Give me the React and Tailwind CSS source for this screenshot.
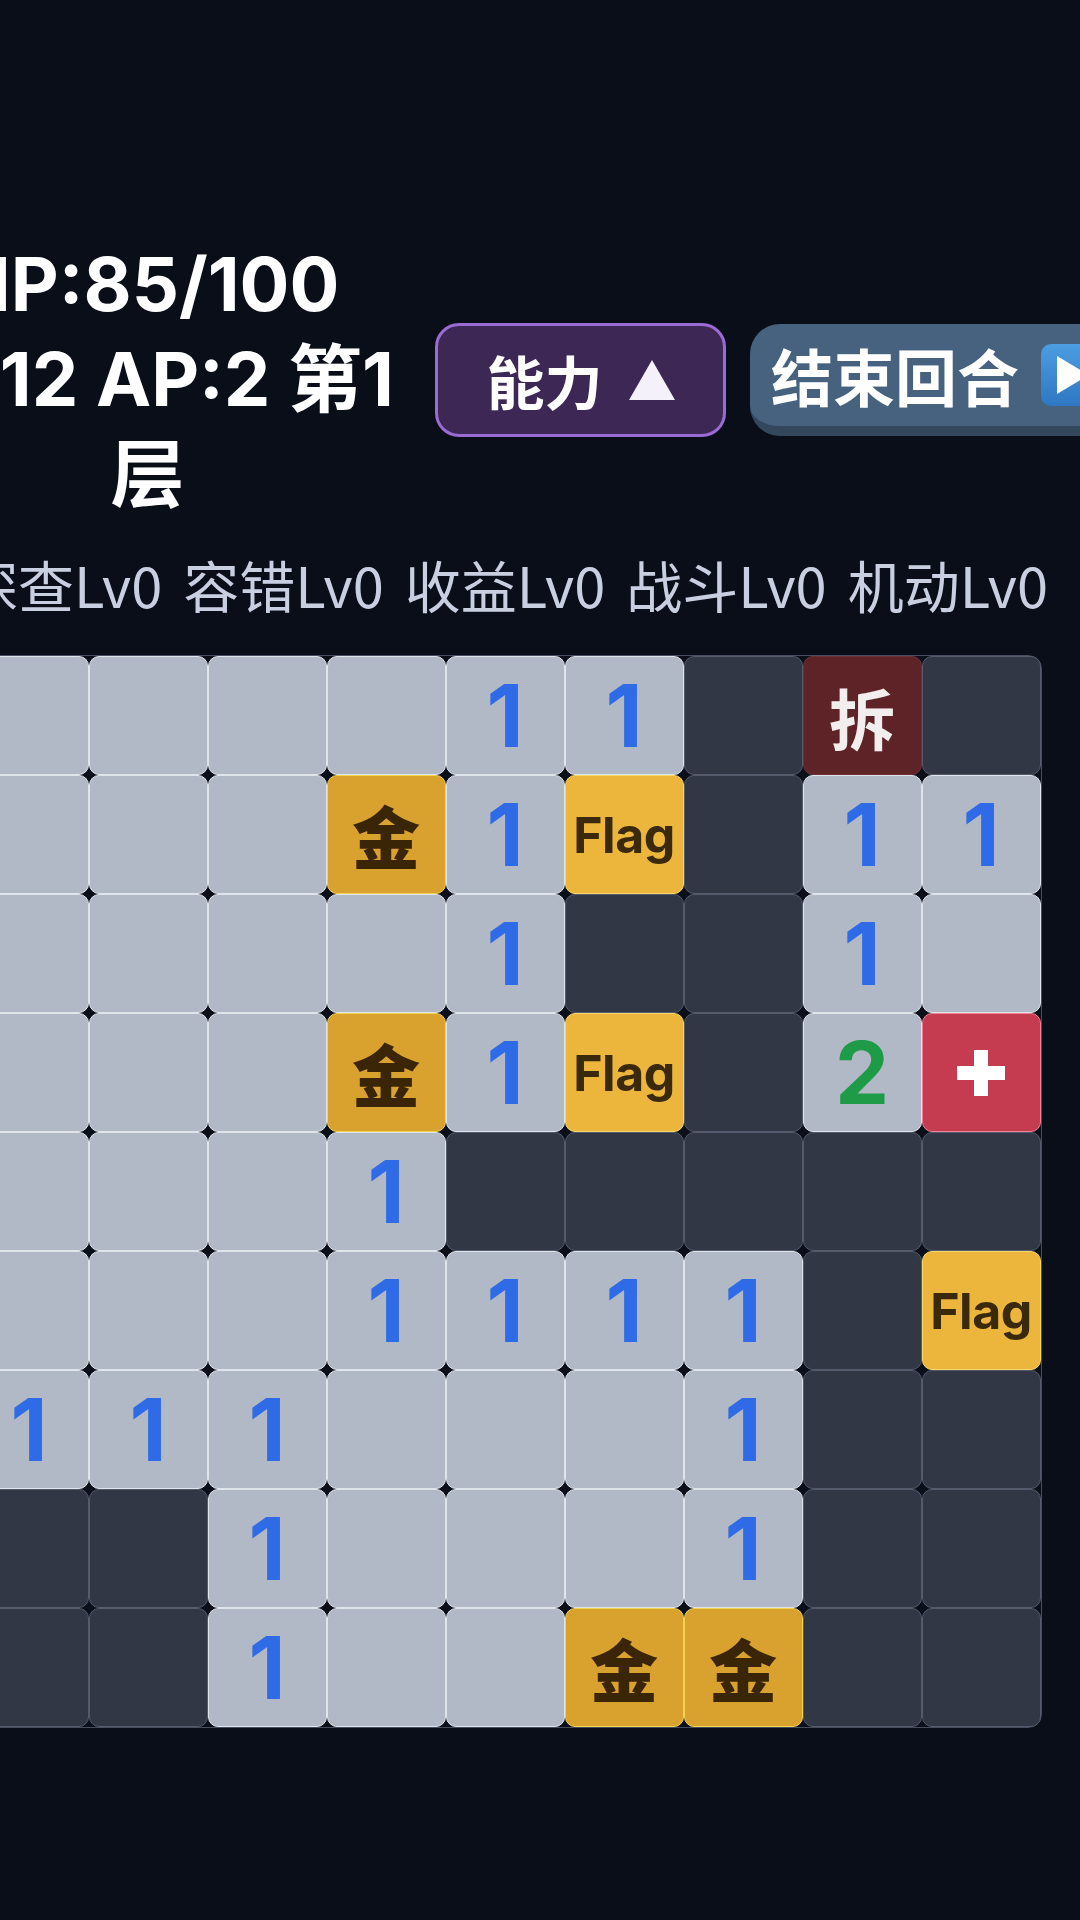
import React from "react";

const BOARD = [
  ["l", "l", "l", "l", "1", "1", "d", "x", "d"],
  ["l", "l", "l", "g", "1", "f", "d", "1", "1"],
  ["l", "l", "l", "l", "1", "d", "d", "1", "l"],
  ["l", "l", "l", "g", "1", "f", "d", "2", "r"],
  ["l", "l", "l", "1", "d", "d", "d", "d", "d"],
  ["l", "l", "l", "1", "1", "1", "1", "d", "f"],
  ["1", "1", "1", "l", "l", "l", "1", "d", "d"],
  ["d", "d", "1", "l", "l", "l", "1", "d", "d"],
  ["d", "d", "1", "l", "l", "g", "g", "d", "d"],
];

function Cell({ v }) {
  const base =
    "h-[119px] rounded-[10px] border flex items-center justify-center select-none";
  if (v === "d")
    return <div className={`${base} bg-[#313745] border-[#535b6d]`} />;
  if (v === "l")
    return <div className={`${base} bg-[#b1b9c6] border-[#e0e4eb]`} />;
  if (v === "1" || v === "2")
    return (
      <div className={`${base} bg-[#b1b9c6] border-[#e0e4eb]`}>
        <span
          className={`font-['Inter','Noto_Sans',sans-serif] font-bold text-[86px] leading-none ${
            v === "1" ? "text-[#2f6be6]" : "text-[#1f9b47]"
          }`}
        >
          {v}
        </span>
      </div>
    );
  if (v === "g")
    return (
      <div className={`${base} bg-[#d9a12d] border-[#f2d453]`}>
        <span className="font-['Noto_Sans_CJK_SC',sans-serif] font-black text-[68px] leading-none text-[#3a2506]">
          金
        </span>
      </div>
    );
  if (v === "f")
    return (
      <div className={`${base} bg-[#ecb63c] border-[#f6d96a]`}>
        <span className="font-['Inter','Noto_Sans',sans-serif] font-bold text-[50px] leading-none text-[#3a2a0b] tracking-[-0.5px]">
          Flag
        </span>
      </div>
    );
  if (v === "x")
    return (
      <div className={`${base} bg-[#5e2327] border-[#6e3236]`}>
        <span className="font-['Noto_Sans_CJK_SC',sans-serif] font-bold text-[66px] leading-none text-[#f3eeee]">
          拆
        </span>
      </div>
    );
  if (v === "r")
    return (
      <div className={`${base} bg-[#c53c51] border-[#ee8494]`}>
        <svg width="48" height="46" viewBox="0 0 48 46">
          <rect x="17" y="0" width="14" height="46" fill="#ffffff" />
          <rect x="0" y="16" width="48" height="14" fill="#ffffff" />
        </svg>
      </div>
    );
  return null;
}

export default function App() {
  return (
    <div className="h-[1920px] w-full overflow-hidden bg-[#0a0e18]">
      <div className="w-[1010px] flex flex-col items-center pt-[237px]">
        {/* Header */}
        <div className="flex items-center gap-6">
          <div className="w-[527px] text-center text-white font-bold text-[74px] leading-[95px] font-['Inter','Noto_Sans_CJK_SC',sans-serif]">
            <div className="whitespace-nowrap">HP:85/100</div>
            <div className="whitespace-nowrap">金:12 AP:2 第1</div>
            <div>层</div>
          </div>
          <button className="h-[114px] w-[291px] shrink-0 rounded-[24px] border-[3px] border-[#9a6bd2] bg-[#3c2755] flex items-center justify-center gap-[26px] text-white">
            <span className="font-['Noto_Sans_CJK_SC',sans-serif] font-bold text-[58px] leading-none">
              能力
            </span>
            <svg width="46" height="40" viewBox="0 0 46 40">
              <path d="M23 0 L46 40 L0 40 Z" fill="#f4f1fa" />
            </svg>
          </button>
          <button className="h-[112px] w-[376px] shrink-0 rounded-[30px] border-b-[10px] border-[#34485d] bg-[#46627f] flex items-center pl-[21px] gap-[22px] text-white">
            <span className="font-['Noto_Sans_CJK_SC',sans-serif] font-bold text-[62px] leading-none whitespace-nowrap">
              结束回合
            </span>
            <span className="w-[62px] h-[62px] shrink-0 rounded-[10px] bg-gradient-to-b from-[#4d9de2] to-[#2f77c3] flex items-center justify-center">
              <svg width="34" height="38" viewBox="0 0 34 38">
                <path d="M2 0 L34 19 L2 38 Z" fill="#ffffff" />
              </svg>
            </span>
          </button>
        </div>

        {/* Stats */}
        <div className="mt-[22px] flex gap-[21px] whitespace-nowrap text-[56px] leading-[80px] text-[#c8cfe0] font-['Noto_Sans_CJK_SC',sans-serif] font-normal">
          <span>探查Lv0</span>
          <span>容错Lv0</span>
          <span>收益Lv0</span>
          <span>战斗Lv0</span>
          <span>机动Lv0</span>
        </div>

        {/* Board */}
        <div className="mt-[31px] shrink-0 rounded-[14px] border border-[#454d5e] bg-[#0b0f19] grid grid-cols-[repeat(9,119px)]">
          {BOARD.map((row, r) =>
            row.map((v, c) => <Cell key={`${r}-${c}`} v={v} />)
          )}
        </div>
      </div>
    </div>
  );
}
